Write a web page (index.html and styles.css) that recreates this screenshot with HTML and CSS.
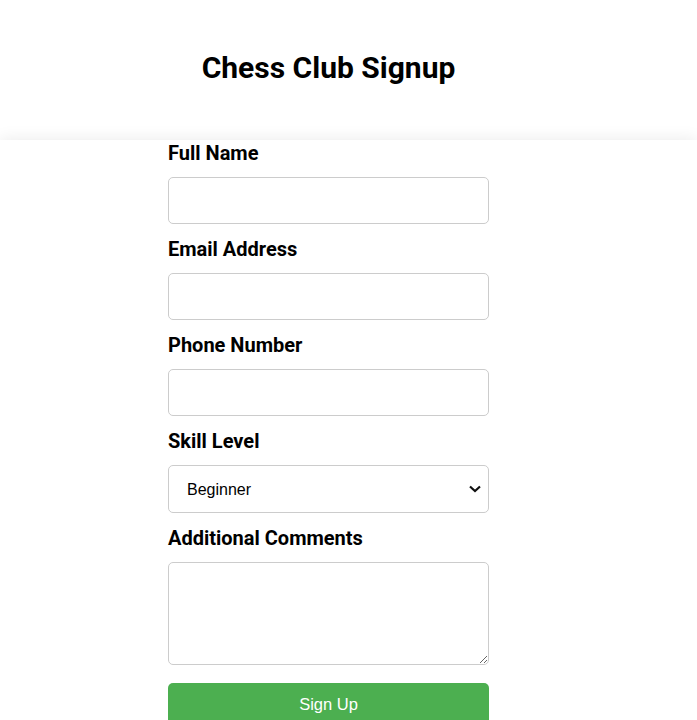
FILE: index.html
```html
<!DOCTYPE html>
<html lang="en">
<head>
<meta charset="utf-8">
<title>Chess Club Signup</title>
<link rel="stylesheet" href="styles.css">
</head>
<body>
<header class="header">
  <div class="column">
    <h1 class="title">Chess Club Signup</h1>
  </div>
</header>
<main class="main">
  <form class="column form">
    <div class="field">
      <label class="label" for="name">Full Name</label>
      <input class="control" id="name" type="text">
    </div>
    <div class="field">
      <label class="label" for="email">Email Address</label>
      <input class="control" id="email" type="email">
    </div>
    <div class="field">
      <label class="label" for="phone">Phone Number</label>
      <input class="control" id="phone" type="tel">
    </div>
    <div class="field">
      <label class="label" for="skill">Skill Level</label>
      <select class="control select" id="skill">
        <option>Beginner</option>
        <option>Intermediate</option>
        <option>Advanced</option>
      </select>
    </div>
    <div class="field field-last">
      <label class="label" for="comments">Additional Comments</label>
      <textarea class="control textarea" id="comments"></textarea>
    </div>
    <button class="submit" type="submit">Sign Up</button>
  </form>
</main>
</body>
</html>
```
FILE: styles.css
```css
* { box-sizing: border-box; }
html, body { margin: 0; padding: 0; background: #fff; }
body { font-family: Roboto, "Liberation Sans", sans-serif; color: #000; }

.column {
  width: 321px;
  margin-left: 168px;
}

.header {
  height: 140px;
  padding-top: 50px;
}
.title {
  margin: 0;
  font-size: 30px;
  line-height: 35px;
  font-weight: 700;
  text-align: center;
}

.main {
  position: relative;
  background: #fff;
  box-shadow: 0 0 16px rgba(0, 0, 0, 0.09);
  min-height: 580px;
}

.form { padding-top: 2px; }

.field { margin-bottom: 14px; }
.field-last { margin-bottom: 0; }

.label {
  display: block;
  font-size: 20px;
  line-height: 23px;
  font-weight: 700;
  margin-bottom: 12px;
}

.control {
  display: block;
  width: 100%;
  height: 47px;
  margin: 0;
  padding: 0 12px;
  border: 1px solid #ccc;
  border-radius: 5px;
  background: #fff;
  font-family: "Liberation Sans", Arial, sans-serif;
  font-size: 16px;
  color: #000;
}
.select {
  height: 48px;
  padding: 0 30px 0 18px;
  -webkit-appearance: none;
  appearance: none;
  background-image: url("data:image/svg+xml;utf8,<svg xmlns='http://www.w3.org/2000/svg' width='12' height='8' viewBox='0 0 12 8'><path d='M1 1.5 L6 6 L11 1.5' fill='none' stroke='%23111' stroke-width='2.2'/></svg>");
  background-repeat: no-repeat;
  background-position: right 7px center;
  background-size: 12px 8px;
}
.textarea {
  height: 103px;
  padding: 12px;
  resize: vertical;
  margin-bottom: 18px;
}

.submit {
  display: block;
  width: 100%;
  height: 44px;
  border: none;
  border-radius: 5px;
  background: #4caf50;
  color: #fff;
  font-family: "Liberation Sans", Arial, sans-serif;
  font-size: 16.5px;
  padding: 0 0 2px;
}
```
